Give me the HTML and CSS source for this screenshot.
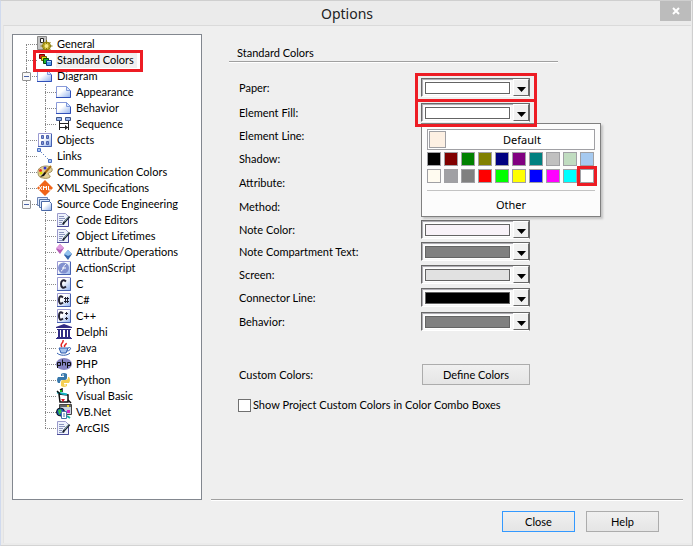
FILE: index.html
```html
<!DOCTYPE html>
<html lang="en"><head><meta charset="utf-8"><title>Options</title><link rel="stylesheet" href="styles.css"></head>
<body>
<div class="window">
<header class="titlebar"><h1>Options</h1><button class="close" aria-label="Close window"><svg width="8" height="8" viewBox="0 0 8 8"><path d="M1 1l6 6M7 1L1 7" stroke="#fff" stroke-width="2"/></svg></button></header>
<div class="client">
<main class="body">
<svg width="0" height="0" class="defs"><defs>
<linearGradient id="pg" x1="0" y1="0" x2="1" y2="1"><stop offset=".4" stop-color="#fff"/><stop offset="1" stop-color="#8fb0ee"/></linearGradient>
<symbol id="page" viewBox="0 0 16 16"><path d="M.5 2.500h10l4 4v7H.5z" fill="url(#pg)" stroke="#8a9ad8"/><path d="M0 13.500h14.500V7" stroke="#2f4fb8" fill="none"/><path d="M10.500 2.500v4h4z" fill="#dbe6fc" stroke="#7d98dc"/></symbol>
<symbol id="doc" viewBox="0 0 16 16"><path d="M1.500 1.500h8l3 3v10h-11z" fill="#eef2fc" stroke="#9a9acb"/><path d="M1 14.500h11.500V6" stroke="#4a4a98" fill="none"/><path d="M3 4.500h5M3 6.500h6M3 8.500h4M3 10.500h3M3 12.500h4" stroke="#8a94bc"/><path d="M13.500 4.500L8 10.500l-1 2" stroke="#1c2230" stroke-width="2" fill="none"/><path d="M12.500 4.500l-4 5" stroke="#9bb"/></symbol>
<symbol id="tile" viewBox="0 0 16 16"><path d="M1.500 1.500h13v13h-13z" fill="url(#pg)" stroke="#9a9ad2"/><path d="M1 14.500h13.500V2" stroke="#4560b0" fill="none"/></symbol>
</defs></svg>
<nav class="tree" aria-label="Option pages"><ul>
<li><a href="#"><svg class="ic" viewBox="0 0 16 16"><path d="M.5.500h9v13h-9z" fill="#c4c4c4" stroke="#8a8a8a"/><path d="M3.500 2.500h3v4h-3z" fill="#fff" stroke="#222"/><circle cx="9.500" cy="10" r="4" fill="#d8c437" stroke="#8a7a0c"/><path d="M9.500 4v12M3.500 10h12M5.500 6l8 8M13.500 6l-8 8" stroke="#8a7a0c"/><circle cx="9.500" cy="10" r="2" fill="#f4ea88"/></svg><span>General</span></a></li>
<li class="marked"><a href="#" aria-current="page"><svg class="ic" viewBox="0 0 16 16"><path d="M2.500 2.500h5v4h-5z" fill="#e01b12" stroke="#700"/><path d="M4.500 4.500h5v4h-5z" fill="#f2d912" stroke="#665c00"/><path d="M6.500 6.500h5v5h-5z" fill="#1eb52b" stroke="#064d0b"/><path d="M9.500 8.500h5v5h-5z" fill="#4f9bec" stroke="#113b8a"/><path d="M10 9.500h4" stroke="#b9dcff"/></svg><span>Standard Colors</span></a></li>
<li class="open"><a href="#"><svg class="ic"><use href="#page"/></svg><span>Diagram</span></a>
<ul>
<li><a href="#"><svg class="ic"><use href="#page"/></svg><span>Appearance</span></a></li>
<li><a href="#"><svg class="ic"><use href="#page"/></svg><span>Behavior</span></a></li>
<li><a href="#"><svg class="ic" viewBox="0 0 16 16"><path d="M.5 1.500h5v3h-5zM9.500 1.500h5v3h-5z" fill="#9ab6ee" stroke="#3d5488"/><path d="M3.500 5v9M12.500 5v9M4 7.500h8M4 11.500h8" stroke="#222" fill="none"/><path d="M9 9l3 2.500L9 14z" fill="#222"/></svg><span>Sequence</span></a></li>
</ul></li>
<li><a href="#"><svg class="ic" viewBox="0 0 16 16"><use href="#tile"/><path d="M4.500 3.500h2v3h-2zM9.500 3.500h2v3h-2zM4.500 9.500h2v3h-2zM9.500 9.500h2v3h-2z" fill="#7d95d6" stroke="#4f62ac"/></svg><span>Objects</span></a></li>
<li><a href="#"><svg class="ic" viewBox="0 0 16 16"><path d="M4 4l9 9" stroke="#2754a8" stroke-dasharray="1 2"/><path d="M.5.500h3v3h-3zM11.500 11.500h3v3h-3z" fill="#a9c4f5" stroke="#4a70c0"/></svg><span>Links</span></a></li>
<li><a href="#"><svg class="ic" viewBox="0 0 16 16"><path d="M1 9C0 5 4 2 9 2c4 0 7 2 6 5-1 2-4 1-4 3 0 1 3 1 2 3-1 1-4 2-7 1-3 0-5-2-5-5z" fill="#e2cf98" stroke="#a59461"/><circle cx="3.500" cy="6.500" r="1.500" fill="#e22"/><circle cx="8" cy="4" r="1.500" fill="#33c"/><circle cx="4" cy="9" r="1.500" fill="#dd0"/><path d="M14 2L7 10" stroke="#a86d13" stroke-width="2"/><path d="M8 8l-5 5 4-1 2-3z" fill="#111"/></svg><span>Communication Colors</span></a></li>
<li><a href="#"><svg class="ic" viewBox="0 0 16 16"><path d="M8 0l8 8-8 8-8-8z" fill="#f06418"/><path d="M2 6l3 4M5 6l-3 4M6.500 10V6L8 8l1.500-2v4M11.500 6v4H14" stroke="#fff" fill="none"/></svg><span>XML Specifications</span></a></li>
<li class="open last"><a href="#"><svg class="ic" viewBox="0 0 16 16"><path d="M.5 1.500h10v8H.5z" fill="#dce8ff" stroke="#6a82b4"/><path d="M2.500 3.500h10v8h-10z" fill="#dce8ff" stroke="#56729f"/><path d="M4.500 5.500h8l2 2v7h-10z" fill="url(#pg)" stroke="#4a68a6"/></svg><span>Source Code Engineering</span></a>
<ul>
<li><a href="#"><svg class="ic"><use href="#doc"/></svg><span>Code Editors</span></a></li>
<li><a href="#"><svg class="ic"><use href="#doc"/></svg><span>Object Lifetimes</span></a></li>
<li><a href="#"><svg class="ic" viewBox="0 0 16 16"><path d="M4 0l4 4-4 6-4-5z" fill="#b55bb5"/><path d="M4 0l4 4-4 2-4-2z" fill="#df9bdf"/><path d="M12 6l4 4-4 6-4-5z" fill="#3566ad"/><path d="M12 6l4 4-4 2-4-2z" fill="#91c1ee"/></svg><span>Attribute/Operations</span></a></li>
<li><a href="#"><svg class="ic" viewBox="0 0 16 16"><use href="#tile"/><circle cx="7.500" cy="8" r="5.500" fill="#8190cf"/><path d="M10 4.500c-3 0-2 6-5 6.500M6 8h4" stroke="#fff" fill="none"/></svg><span>ActionScript</span></a></li>
<li><a href="#"><svg class="ic" viewBox="0 0 16 16"><use href="#tile"/><path d="M10 5.500C7 3 5 5 5 8s2 5 5 2.500" stroke="#223" stroke-width="2" fill="none"/></svg><span>C</span></a></li>
<li><a href="#"><svg class="ic" viewBox="0 0 16 16"><use href="#tile"/><path d="M7 5.500C4 3 3 5 3 8s1 5 4 2.500" stroke="#223" stroke-width="2" fill="none"/><path d="M9.500 5v6M11.500 5v6M8 6.500h5M8 9.500h5" stroke="#223"/></svg><span>C#</span></a></li>
<li><a href="#"><svg class="ic" viewBox="0 0 16 16"><use href="#tile"/><path d="M7 5.500C4 3 3 5 3 8s1 5 4 2.500" stroke="#223" stroke-width="2" fill="none"/><path d="M10.500 4v3M9 5.500h3M10.500 9v3M9 10.500h3" stroke="#223"/></svg><span>C++</span></a></li>
<li><a href="#"><svg class="ic" viewBox="0 0 16 16"><path d="M0 4V3l8-3 8 3v1zM1 5h14v1H1zM2 6h2v7H2zM5 6h2v7H5zM9 6h2v7H9zM12 6h2v7h-2zM1 13h14v1H1zM0 14h16v1H0z" fill="#302b84"/></svg><span>Delphi</span></a></li>
<li><a href="#"><svg class="ic" viewBox="0 0 16 16"><path d="M6 7C3 4 8 3 7 0M9 7c-2-2 2-2 1-4" stroke="#e32222" stroke-width="1.500" fill="none"/><path d="M3 8h9l-2 5H5z" fill="#a5c2ec" stroke="#2e5caf"/><path d="M12 8c4-2 3 3-1 3M1 13c3 3 10 3 13 0" stroke="#2e5caf" fill="none"/></svg><span>Java</span></a></li>
<li><a href="#"><svg class="ic" viewBox="0 0 16 16"><ellipse cx="8" cy="8" rx="8" ry="6" fill="#8583c2"/><path d="M1.500 12V6.500h3v3h-3M6.500 3.500v6m0-3h3v3M11.500 12V6.500h3v3h-3" stroke="#111" fill="none"/></svg><span>PHP</span></a></li>
<li><a href="#"><svg class="ic" viewBox="0 0 16 16"><path d="M5 4V2q3-2 6 0v4q0 2-2 2H6q-2 0-2 3H2q-2-3 0-6h6V4z" fill="#3878ab"/><path d="M11 12v2q-3 2-6 0v-4q0-2 2-2h3q2 0 2-3h1q2 3 0 6H8v1z" fill="#f5cf52"/><circle cx="7" cy="3" r=".8" fill="#fff"/><circle cx="9" cy="13" r=".8" fill="#fff"/></svg><span>Python</span></a></li>
<li><a href="#"><svg class="ic" viewBox="0 0 16 16"><path d="M3 6l9 1v7H4z" fill="#fff" stroke="#111" stroke-width="1.500"/><path d="M1 4.500l10 2" stroke="#14b4c4" stroke-width="2"/><path d="M1 3l3 3M4 2l2-1v3M12 12l3 3" stroke="#111" stroke-width="1.500" fill="none"/><path d="M4 2h2v2H4z" fill="#2b2"/><path d="M5 11h4l-2 3z" fill="#d12"/></svg><span>Visual Basic</span></a></li>
<li><a href="#"><svg class="ic" viewBox="0 0 16 16"><path d="M3.500.5h12v10h-12z" fill="#c8d5df" stroke="#444"/><path d="M4 1h11v2H4z" fill="#666"/><circle cx="4.500" cy="8" r="4" fill="#154ec0" stroke="#111"/><path d="M2 6l3-1 1 3-3 3z" fill="#36c24a"/><path d="M5.500 7.500h5v7h-5z" fill="#fff" stroke="#4870a8"/><path d="M7 10h2M7 12h2" stroke="#4870a8"/><path d="M11 1h2v2h-2z" fill="#ed2"/><path d="M11 6h3v3h-3z" fill="#d22ac4"/><path d="M11 12l3 2" stroke="#17b4a4" stroke-width="2"/></svg><span>VB.Net</span></a></li>
<li class="last"><a href="#"><svg class="ic"><use href="#doc"/></svg><span>ArcGIS</span></a></li>
</ul></li>
</ul></nav>
<section class="panel">
<h2>Standard Colors</h2>
<div class="rows">
<label for="c1">Paper:</label><div class="combo marked"><select id="c1"></select><i class="sw white"></i><i class="arrow"></i></div>
<label for="c2">Element Fill:</label><div class="combo marked second"><select id="c2"></select><i class="sw white"></i><i class="arrow"></i>
<div class="popup"><button class="default"><i></i><span>Default</span></button>
<div class="palette"><button class="k1" aria-label="Black"></button><button class="k2" aria-label="Maroon"></button><button class="k3" aria-label="Green"></button><button class="k4" aria-label="Olive"></button><button class="k5" aria-label="Navy"></button><button class="k6" aria-label="Purple"></button><button class="k7" aria-label="Teal"></button><button class="k8" aria-label="Silver"></button><button class="k9" aria-label="Money green"></button><button class="k10" aria-label="Sky blue"></button><button class="k11" aria-label="Cream"></button><button class="k12" aria-label="Medium gray"></button><button class="k13" aria-label="Gray"></button><button class="k14" aria-label="Red"></button><button class="k15" aria-label="Lime"></button><button class="k16" aria-label="Yellow"></button><button class="k17" aria-label="Blue"></button><button class="k18" aria-label="Fuchsia"></button><button class="k19" aria-label="Aqua"></button><button class="k20 marked" aria-label="White"></button></div>
<button class="other">Other</button></div></div>
<label for="c3">Element Line:</label><div class="combo"><select id="c3"></select><i class="sw gray"></i><i class="arrow"></i></div>
<label for="c4">Shadow:</label><div class="combo"><select id="c4"></select><i class="sw gray"></i><i class="arrow"></i></div>
<label for="c5">Attribute:</label><div class="combo"><select id="c5"></select><i class="sw gray"></i><i class="arrow"></i></div>
<label for="c6">Method:</label><div class="combo"><select id="c6"></select><i class="sw gray"></i><i class="arrow"></i></div>
<label for="c7">Note Color:</label><div class="combo"><select id="c7"></select><i class="sw note"></i><i class="arrow"></i></div>
<label for="c8">Note Compartment Text:</label><div class="combo"><select id="c8"></select><i class="sw gray"></i><i class="arrow"></i></div>
<label for="c9">Screen:</label><div class="combo"><select id="c9"></select><i class="sw light"></i><i class="arrow"></i></div>
<label for="c10">Connector Line:</label><div class="combo"><select id="c10"></select><i class="sw black"></i><i class="arrow"></i></div>
<label for="c11">Behavior:</label><div class="combo"><select id="c11"></select><i class="sw gray"></i><i class="arrow"></i></div>
</div>
<div class="custom"><span>Custom Colors:</span><button class="btn">Define Colors</button></div>
<label class="check"><input type="checkbox">Show Project Custom Colors in Color Combo Boxes</label>
</section>
</main>
<footer><button class="btn primary">Close</button><button class="btn">Help</button></footer>
</div>
</div>
</body></html>
```
FILE: styles.css
```css
*, *::before, *::after { box-sizing: border-box; }
body { margin: 0; background: #ebebeb; color: #000; font: 11px/16px Lato, "Noto Sans", sans-serif; }
button, select, input { font: inherit; color: inherit; margin: 0; padding: 0; }
h1, h2, ul { margin: 0; padding: 0; font-weight: normal; }
ul { list-style: none; }
a { color: inherit; text-decoration: none; }
i { display: block; }
.window { min-height: 100vh; display: flex; flex-direction: column; border: 1px solid #cfcfcf; border-left-color: #d0daee; border-bottom-color: #d4d4d4; padding: 0 1px 2px 2px; }
.titlebar { display: grid; grid-template-columns: 1fr auto 1fr; height: 24px; }
.titlebar h1 { grid-column: 2; font: 14px/26px "Noto Sans", sans-serif; color: #222; }
.close { justify-self: end; width: 31px; height: 20px; border: 0; background: #bcbcbc; display: grid; place-items: center; }
.client { flex: 1; display: flex; flex-direction: column; background: #efefef; border: 1px solid #dadada; border-width: 1px 0 0 1px; border-left-color: #e3e3e3; }
.body { flex: 1; display: flex; padding: 8px 9px 0 8px; }
.defs { position: absolute; }
.tree { width: 190px; border: 1px solid #82878f; background: #fff; padding: 1px 0 0 13px; }
.tree li { position: relative; padding-left: 11px; }
.tree li::before { content: ""; position: absolute; left: 0; top: 0; bottom: 0; border-left: 1px dotted #888; }
.tree > ul > li:first-child::before { top: 8px; }
.tree li.last::before { bottom: auto; height: 8px; }
.tree a { position: relative; display: flex; align-items: center; height: 16px; gap: 3px; white-space: nowrap; }
.tree a::before { content: ""; position: absolute; left: -11px; width: 11px; top: 8px; border-top: 1px dotted #888; }
.tree li ul { padding-left: 8px; }
.tree .open > a::after { content: ""; position: absolute; left: -15px; top: 4px; width: 9px; height: 9px; border: 1px solid #919191; border-radius: 1px; background: linear-gradient(#4b63a7, #4b63a7) center / 5px 1px no-repeat #f8f8f8; }
.ic { position: relative; width: 16px; height: 16px; flex: none; }
.tree a span { padding: 0 1px; }
.tree [aria-current] span { background: #f0f0f0; padding-right: 3px; }
.marked { position: relative; }
.marked::after { content: ""; position: absolute; z-index: 5; border: 3px solid #ed1c24; pointer-events: none; }
.tree .marked::after { left: 7px; top: -2px; width: 110px; height: 22px; }
.panel { flex: 1; padding: 10px 0 0 27px; }
.panel h2 { width: 329px; padding: 1px 0 0 8px; font-size: 11px; line-height: 16px; border-bottom: 1px solid #a0a0a0; box-shadow: 0 1px #fff; }
.rows { display: grid; grid-template-columns: 182px 109px; grid-template-rows: 25px 23px 23px 24px 24px 23px 22px 23px 23px 24px 19px; padding: 16px 0 0 10px; align-items: start; }
.rows label { line-height: 20px; }
.combo { position: relative; display: grid; width: 109px; height: 19px; }
.combo > * { grid-area: 1 / 1; }
.combo select { appearance: none; width: 109px; height: 19px; border: 1px solid; border-color: #696969 #696969 #fff #696969; border-radius: 0; background: #f7f7f7; box-shadow: inset 1px 1px #b0aeb4; }
.sw { margin: 4px 0 0 4px; width: 85px; height: 12px; border: 1px solid #646464; box-shadow: 0 0 0 1px #fff; pointer-events: none; }
.arrow { margin: 1px 0 0 92px; width: 16px; height: 17px; background: #f0f0f0; border: 1px solid; border-color: #fff #696969 #696969 #fff; pointer-events: none; }
.arrow::before { content: ""; display: block; width: 9px; height: 5px; margin: 7px 0 0 3px; background: #000; clip-path: polygon(0 0, 100% 0, 50% 100%); }
.white { background: #fff; } .gray { background: #808080; } .note { background: #f8f2f8; } .light { background: #e1e1e1; } .black { background: #000; }
.combo.marked::after { left: -6px; top: -5px; width: 122px; height: 29px; }
.combo.second::after { top: -4px; height: 28px; }
.popup { position: absolute; z-index: 3; left: 0; top: 20px; width: 180px; height: 94px; border: 1px solid #808080; background: #fcfcfc; padding: 5px; box-shadow: 2px 2px 2px #c4c4c4; }
.default { display: flex; align-items: center; width: 168px; height: 21px; border: 1px solid #a0a0a4; background: #fff; padding: 0 1px; }
.default i { width: 17px; height: 17px; border: 1px solid #a0a0a4; background: #fdf0e3; }
.default span { flex: 1; padding-left: 5px; }
.palette { display: grid; grid-template-columns: repeat(10, 14px); gap: 3px; padding: 2px 0 7px; border-bottom: 1px solid #c3c3c3; }
.palette button { height: 14px; border: 1px solid #a0a0a4; }
.palette .marked::after { inset: -4px; }
.k1 { background: #000; } .k2 { background: #800000; } .k3 { background: #008000; } .k4 { background: #808000; } .k5 { background: #000080; }
.k6 { background: #800080; } .k7 { background: #008080; } .k8 { background: #c0c0c0; } .k9 { background: #c0dcc0; } .k10 { background: #a6caf0; }
.k11 { background: #fffbf0; } .k12 { background: #a0a0a4; } .k13 { background: #808080; } .k14 { background: #f00; } .k15 { background: #0f0; }
.k16 { background: #ff0; } .k17 { background: #00f; } .k18 { background: #f0f; } .k19 { background: #0ff; } .k20 { background: #fff; }
.default, .other { font: 11px/16px "Noto Sans", sans-serif; }
.other { width: 168px; height: 28px; border: 0; background: none; }
.btn { width: 73px; height: 21px; border: 1px solid #acacac; background: linear-gradient(#f0f0f0, #e5e5e5); }
.primary { border-color: #3399ff; }
.custom { display: grid; grid-template-columns: 182px 109px; padding: 33px 0 0 10px; align-items: center; }
.custom .btn { width: 108px; margin-left: 1px; }
.check { display: flex; align-items: center; gap: 2px; padding: 12px 0 0 9px; }
.check input { appearance: none; width: 13px; height: 13px; border: 1px solid #707070; background: #fff; }
footer { display: flex; justify-content: flex-end; gap: 11px; margin: -1px 8px 0 207px; padding: 11px 24px 11px 0; border-top: 1px solid #a0a0a0; box-shadow: inset 0 1px #fff; }
```
